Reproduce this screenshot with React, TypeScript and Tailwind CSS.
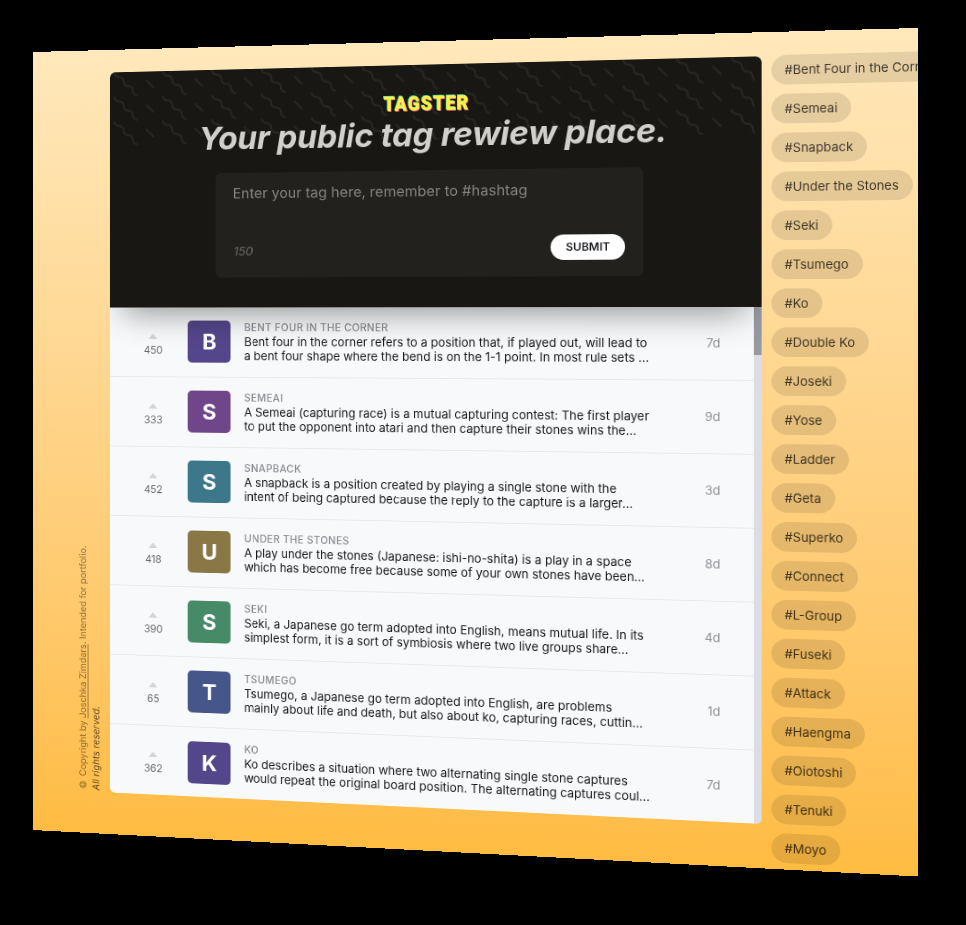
import React from "react";

const PLANE = { width: 962, height: 904 };

const QUAD = { left: 32.5, right: 918, topLeft: 52, topRight: 28, bottomLeft: 830, bottomRight: 876.6 };

// Perspective transform that tilts the page around a vertical axis.
function tilt() {
  const { width: W, height: H } = PLANE;
  const w0 = H / (QUAD.bottomLeft - QUAD.topLeft);
  const w1 = H / (QUAD.bottomRight - QUAD.topRight);
  const p = (w1 - w0) / W;
  const tx = QUAD.left * w0;
  const a = (QUAD.right * w1 - tx) / W;
  const ty = QUAD.topLeft * w0;
  const c = (QUAD.topRight * w1 - ty) / W;
  return `matrix3d(${[a, c, 0, p, 0, 1, 0, 0, 0, 0, 1, 0, tx, ty, 0, w0].join(",")})`;
}

const entries = [
  { votes: 450, color: "bg-[#54468a]", name: "Bent Four in the Corner", lines: ["Bent four in the corner refers to a position that, if played out, will lead to", "a bent four shape where the bend is on the 1-1 point. In most rule sets ..."], age: "7d" },
  { votes: 333, color: "bg-[#70468a]", name: "Semeai", lines: ["A Semeai (capturing race) is a mutual capturing contest: The first player", "to put the opponent into atari and then capture their stones wins the..."], age: "9d" },
  { votes: 452, color: "bg-[#3c788a]", name: "Snapback", lines: ["A snapback is a position created by playing a single stone with the", "intent of being captured because the reply to the capture is a larger..."], age: "3d" },
  { votes: 418, color: "bg-[#8a7746]", name: "Under the Stones", lines: ["A play under the stones (Japanese: ishi-no-shita) is a play in a space", "which has become free because some of your own stones have been..."], age: "8d" },
  { votes: 390, color: "bg-[#468a68]", name: "Seki", lines: ["Seki, a Japanese go term adopted into English, means mutual life. In its", "simplest form, it is a sort of symbiosis where two live groups share..."], age: "4d" },
  { votes: 65, color: "bg-[#46568a]", name: "Tsumego", lines: ["Tsumego, a Japanese go term adopted into English, are problems", "mainly about life and death, but also about ko, capturing races, cuttin..."], age: "1d" },
  { votes: 362, color: "bg-[#54468a]", name: "Ko", lines: ["Ko describes a situation where two alternating single stone captures", "would repeat the original board position. The alternating captures coul..."], age: "7d" },
];

const tags = [
  "Bent Four in the Corner", "Semeai", "Snapback", "Under the Stones", "Seki", "Tsumego", "Ko",
  "Double Ko", "Joseki", "Yose", "Ladder", "Geta", "Superko", "Connect", "L-Group", "Fuseki",
  "Attack", "Haengma", "Oiotoshi", "Tenuki", "Moyo",
];

function Wiggles() {
  return (
    <svg className="absolute top-0 left-[4px] h-[84.6px] w-[702px]" aria-hidden="true">
      <defs>
        <pattern id="wiggle" width="52" height="26" patternUnits="userSpaceOnUse" patternTransform="scale(1.085)">
          <path
            fill="#272723"
            d="M10 10c0-2.21-1.79-4-4-4-3.314 0-6-2.686-6-6h2c0 2.21 1.79 4 4 4 3.314 0 6 2.686 6 6 0 2.21 1.79 4 4 4 3.314 0 6 2.686 6 6 0 2.21 1.79 4 4 4v2c-3.314 0-6-2.686-6-6 0-2.21-1.79-4-4-4-3.314 0-6-2.686-6-6zm25.464-1.95l8.486 8.486-1.414 1.414-8.486-8.486 1.414-1.414z"
          />
        </pattern>
      </defs>
      <rect width="100%" height="100%" fill="url(#wiggle)" />
    </svg>
  );
}

function Header() {
  return (
    <header className="relative z-10 flex h-[271px] shrink-0 flex-col items-center rounded-t-md bg-[#181713] pt-[31px] shadow-[0_22px_34px_-16px_rgba(0,0,0,0.42)]">
      <Wiggles />
      <div className="relative left-[1px] h-6 scale-x-[0.86] font-['Roboto',sans-serif] text-[22.5px] leading-6 font-black tracking-[1.5px] text-[#fbf145] [-webkit-text-stroke:0.5px_#fbf145] [text-shadow:-1px_-1px_0_#2ed6b8,1px_1px_0_#e0349a]">
        TAGSTER
      </div>
      <h1 className="relative ml-[5px] text-[36px] leading-[46px] font-bold tracking-[-0.2px] whitespace-nowrap text-[#d1d0cd] italic">
        Your public tag rewiew place.
      </h1>
      <div className="relative mt-[17.5px] flex h-[119px] w-[468px] flex-col justify-between rounded-md bg-[#22211e] px-[19px] pt-[13px] pb-[18px]">
        <p className="text-[16px] leading-5 text-[#84837f]">Enter your tag here, remember to #hashtag</p>
        <div className="flex items-center justify-between">
          <span className="relative top-[3px] left-[1px] text-[13px] font-medium text-[#62615e] italic">150</span>
          <button className="h-7 w-[79.5px] rounded-full bg-white text-[12px] font-semibold text-[#1c1b20]">SUBMIT</button>
        </div>
      </div>
    </header>
  );
}

function Entry({ entry }: { entry: (typeof entries)[number] }) {
  return (
    <li className="flex h-20 items-center border-b border-[#e6e8ea] last:border-b-0">
      <div className="flex w-[100px] shrink-0 flex-col items-center gap-[5px] pt-[8px]">
        <svg className="h-[6px] w-[10px]" viewBox="0 0 10 6">
          <path d="M5 0 10 6H0z" fill="#d3d5d8" />
        </svg>
        <span className="text-[11.5px] leading-4 text-[#66686d]">{entry.votes}</span>
      </div>
      <div className={`ml-[-10.5px] flex h-12 w-[49px] shrink-0 items-center justify-center rounded-[5px] pt-[1px] pl-[1px] text-[24.5px] font-bold text-white ${entry.color}`}>
        {entry.name[0]}
      </div>
      <div className="ml-[15.5px] flex-1 pb-[1px] text-[13px] leading-4 whitespace-nowrap text-[#141519]">
        <div className="text-[11.3px] font-medium tracking-[0.3px] text-[#8b8d93] uppercase">{entry.name}</div>
        <div>{entry.lines[0]}</div>
        <div>{entry.lines[1]}</div>
      </div>
      <span className="mr-[34px] pt-[1px] text-[13px] text-[#8f9196]">{entry.age}</span>
    </li>
  );
}

export default function App() {
  return (
    <div className="h-[925px] w-[966px] overflow-hidden bg-black font-['Inter',sans-serif]">
      <div
        className="flex h-[904px] w-[962px] origin-top-left overflow-hidden bg-linear-to-b from-[#ffe8bb] to-[#ffbc42]"
        style={{ transform: tilt() }}
      >
        <aside className="flex w-[91.4px] shrink-0 items-end justify-end pr-[9.5px] pb-[49px]">
          <p className="rotate-180 text-[10.55px] leading-[14.5px] whitespace-nowrap text-black/45 [writing-mode:vertical-rl]">
            © Copyright by <a className="underline">Joschka Zimdars</a>. Intended for portfolio.
            <br />
            <em className="text-[11px] text-black/65">All rights reserved.</em>
          </p>
        </aside>

        <main className="mt-[25.6px] flex h-[830.4px] w-[712.2px] shrink-0 flex-col overflow-hidden rounded-md bg-[#f8f9fa]">
          <Header />
          <div className="flex min-h-0 flex-1">
            <ul className="flex-1">
              {entries.map((entry) => (
                <Entry key={entry.name} entry={entry} />
              ))}
            </ul>
            <div className="w-2 bg-[#dadde5]">
              <div className="h-[52.5px] bg-[#969ba3]" />
            </div>
          </div>
        </main>

        <nav className="ml-[10px] flex shrink-0 flex-col items-start gap-[10px] pt-[24.5px]">
          {tags.map((tag) => (
            <a key={tag} className="h-8 rounded-full bg-black/10 px-[14px] text-[13px] leading-8 whitespace-nowrap text-black/75">
              #{tag}
            </a>
          ))}
        </nav>
      </div>
    </div>
  );
}
